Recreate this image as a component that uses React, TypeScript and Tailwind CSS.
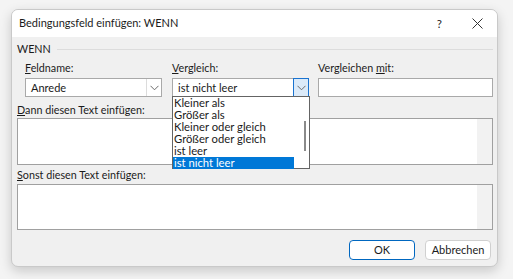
import React from 'react'

const font = { fontFamily: "Lato, 'Noto Sans', sans-serif" }

function Chevron() {
  return (
    <svg width="9" height="6" viewBox="0 0 9 6" fill="none">
      <path d="M0.5 0.8L4.5 4.8L8.5 0.8" stroke="#6b6b6b" strokeWidth="1" />
    </svg>
  )
}

function Combo({ value, active }: { value: string; active?: boolean }) {
  return (
    <div className="flex h-[19px] w-[137px] shrink-0 border border-[#a9a9a9] bg-white">
      <div className="flex-1 pl-[5px] text-[11px] leading-[17px] text-[#1a1a1a]">{value}</div>
      {active ? (
        <div className="-my-px -mr-px flex w-[16px] shrink-0 items-center justify-center border border-[#1a73d0] bg-[#dbeaf9]">
          <Chevron />
        </div>
      ) : (
        <div className="flex w-[15px] shrink-0 items-center justify-center border-l border-[#dcdcdc]">
          <Chevron />
        </div>
      )}
    </div>
  )
}

const options = ['Kleiner als', 'Größer als', 'Kleiner oder gleich', 'Größer oder gleich', 'ist leer', 'ist nicht leer']

export default function App() {
  return (
    <div className="h-[279px] w-[513px] bg-[#f4f4f4] pl-[11px] pt-[9px] text-[10.75px]" style={font}>
      <div className="relative flex h-[258px] w-[487px] flex-col overflow-hidden rounded-[7px] border border-[#c9c9c9] bg-[#f0f0f0] shadow-[0_4px_12px_rgba(0,0,0,0.18)]">
        {/* title bar */}
        <div className="flex h-[27px] shrink-0 items-center bg-white pl-[7px] pr-[14px] text-[11px] text-[#1b1b1b]">
          <span className="flex-1">Bedingungsfeld einfügen: WENN</span>
          <span className="mr-[30px] text-[11.5px]">?</span>
          <svg width="11" height="11" viewBox="0 0 11 11">
            <path d="M0.5 0.5L10.5 10.5M10.5 0.5L0.5 10.5" stroke="#333" strokeWidth="1" />
          </svg>
        </div>

        <div className="flex flex-col pl-[5px] pr-[4px]">
          {/* group header */}
          <div className="mt-[5px] flex h-[14px] items-center">
            <span className="leading-[14px] text-[#1b1b1b]">WENN</span>
            <div className="ml-[6px] h-px flex-1 bg-[#dcdcdc]" />
          </div>

          {/* field row */}
          <div className="mt-[5px] grid grid-cols-[137px_137px_175px] pl-[8px] text-[#1b1b1b]">
            <div className="flex flex-col">
              <span className="h-[14px] leading-[14px]"><u>F</u>eldname:</span>
              <div className="mt-[3px]"><Combo value="Anrede" /></div>
            </div>
            <div className="relative ml-[10px] flex flex-col">
              <span className="h-[14px] leading-[14px]"><u>V</u>ergleich:</span>
              <div className="mt-[3px]"><Combo value="ist nicht leer" active /></div>
              <div className="absolute left-0 top-[35px] z-10 flex h-[73px] w-[138px] border border-[#646464] bg-white">
                <div className="flex flex-1 flex-col text-[11.25px]">
                  {options.map((o, i) => (
                    <div
                      key={o}
                      className={
                        i === options.length - 1
                          ? 'h-[12px] bg-[#0078d7] pl-[1px] leading-[12px] text-white'
                          : 'h-[12px] pl-[1px] leading-[12px] text-[#1a1a1a]'
                      }
                    >
                      {o}
                    </div>
                  ))}
                </div>
                <div className="flex w-[15px] shrink-0 justify-center pl-[6px] pt-[24px]">
                  <div className="h-[30px] w-[2px] bg-[#8a8a8a]" />
                </div>
              </div>
            </div>
            <div className="ml-[19px] flex flex-col">
              <span className="h-[14px] leading-[14px]">Vergleichen <u>m</u>it:</span>
              <div className="mt-[3px] h-[19px] w-[175px] border border-[#a9a9a9] bg-white" />
            </div>
          </div>

          {/* then text */}
          <span className="mt-[6px] h-[14px] leading-[14px] text-[#1b1b1b]"><u>D</u>ann diesen Text einfügen:</span>
          <div className="mt-px flex h-[47px] w-[476px] border border-[#a0a0a0] bg-white">
            <div className="flex-1" />
            <div className="w-[15px] bg-[#f2f2f2]" />
          </div>

          {/* else text */}
          <span className="mt-[3px] h-[14px] leading-[14px] text-[#1b1b1b]"><u>S</u>onst diesen Text einfügen:</span>
          <div className="mt-[2px] flex h-[46px] w-[476px] border border-[#a0a0a0] bg-white">
            <div className="flex-1" />
            <div className="w-[15px] bg-[#f2f2f2]" />
          </div>

          {/* buttons */}
          <div className="mt-[10px] flex justify-end gap-[10px] pr-[2px]">
            <button className="h-[20px] w-[66px] rounded-[4px] border border-[#0067c0] bg-white text-[11px] text-[#1b1b1b]">OK</button>
            <button className="h-[20px] w-[66px] rounded-[4px] border border-[#d0d0d0] bg-white text-[11px] text-[#1b1b1b]">Abbrechen</button>
          </div>
        </div>
      </div>
    </div>
  )
}
